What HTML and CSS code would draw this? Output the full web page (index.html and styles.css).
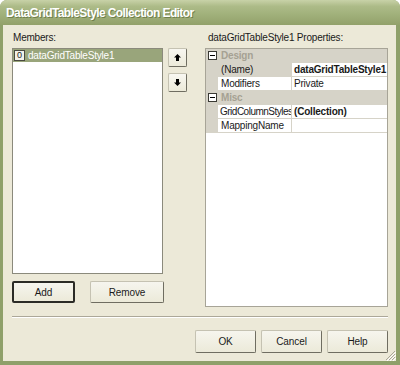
FILE: index.html
```html
<!DOCTYPE html>
<html>
<head>
<meta charset="utf-8">
<link rel="stylesheet" href="styles.css">
</head>
<body>
<div class="window">
  <div class="titlebar"><span class="title">DataGridTableStyle Collection Editor</span></div>
  <div class="client">
    <div class="top">
      <div class="members-col">
        <div class="label">Members:</div>
        <div class="listbox">
          <div class="item selected"><span class="idx">0</span><span class="item-text">dataGridTableStyle1</span></div>
        </div>
        <div class="list-buttons">
          <button class="btn btn-default add">Add</button>
          <button class="btn remove">Remove</button>
        </div>
      </div>
      <div class="arrows">
        <button class="arrow-btn"><svg width="7" height="7" viewBox="0 0 7 7"><path d="M3.5 0 L7 3.5 H5 V7 H2 V3.5 H0 Z" fill="#000"/></svg></button>
        <button class="arrow-btn"><svg width="7" height="7" viewBox="0 0 7 7"><path d="M3.5 7 L7 3.5 H5 V0 H2 V3.5 H0 Z" fill="#000"/></svg></button>
      </div>
      <div class="props-col">
        <div class="label">dataGridTableStyle1 Properties:</div>
        <div class="propgrid">
          <div class="pg-row category"><span class="gutter"><span class="toggle"></span></span><span class="cat-name">Design</span></div>
          <div class="pg-row"><span class="gutter"></span><span class="pname sel">(Name)</span><span class="pval bold">dataGridTableStyle1</span></div>
          <div class="pg-row"><span class="gutter"></span><span class="pname">Modifiers</span><span class="pval">Private</span></div>
          <div class="pg-row category"><span class="gutter"><span class="toggle"></span></span><span class="cat-name">Misc</span></div>
          <div class="pg-row"><span class="gutter"></span><span class="pname tight">GridColumnStyles</span><span class="pval bold">(Collection)</span></div>
          <div class="pg-row"><span class="gutter"></span><span class="pname">MappingName</span><span class="pval"></span></div>
        </div>
      </div>
    </div>
    <div class="separator"></div>
    <div class="dialog-buttons">
      <button class="btn dlg">OK</button>
      <button class="btn dlg">Cancel</button>
      <button class="btn dlg">Help</button>
    </div>
    <svg class="grip" width="12" height="12" viewBox="0 0 12 12">
      <path d="M11 2 L2 11 M11 5 L5 11 M11 8 L8 11" stroke="#a9a797" stroke-width="1"/>
      <path d="M12 3 L3 12 M12 6 L6 12 M12 9 L9 12" stroke="#fff" stroke-width="1"/>
    </svg>
  </div>
</div>
</body>
</html>
```

FILE: styles.css
```css
* { box-sizing: border-box; }
html, body { margin: 0; padding: 0; background: #fff; }
body { font-family: "Liberation Sans", Arial, sans-serif; font-size: 10px; color: #1a1a1a; }

.window {
  width: 400px;
  height: 365px;
  display: flex;
  flex-direction: column;
  background: #8fa06a;
  border-radius: 7px 7px 0 0;
  overflow: hidden;
}

.titlebar {
  height: 25px;
  flex: none;
  background: linear-gradient(#c8d2a8, #adbb88 25%, #a0b07a 60%, #92a16a);
  padding: 6px 0 0 6px;
}
.title {
  color: #fff;
  font-weight: bold;
  font-size: 12px;
  letter-spacing: -0.6px;
  text-shadow: 1px 1px 0 #6f7f4b;
}

.client {
  position: relative;
  flex: 1;
  margin: 0 4px 4px 3px;
  background: #ece9d8;
  padding: 7px 8px 0 9px;
  letter-spacing: -0.2px;
}

.top { display: flex; align-items: flex-start; }

.label { height: 16px; line-height: 12px; }
.members-col { width: 154px; }
.members-col .label { padding-left: 1px; }
.props-col .label { padding-left: 3px; }

.listbox {
  width: 151px;
  height: 226px;
  background: #fff;
  border: 1px solid #8b8a7c;
}
.item {
  display: flex;
  align-items: center;
  height: 13px;
}
.item.selected { background: #99a57b; }
.idx {
  width: 11px;
  height: 11px;
  margin: 0 3px 0 1px;
  border: 1px solid #4a4a40;
  background: #f2f1e9;
  font-size: 9px;
  line-height: 9px;
  text-align: center;
  color: #222;
}
.item-text { color: #fff; line-height: 13px; }

.list-buttons { display: flex; margin-top: 7px; }

.btn {
  font-family: "Liberation Sans", Arial, sans-serif;
  font-size: 10px;
  letter-spacing: -0.1px;
  color: #1a1a1a;
  height: 22px;
  padding: 0;
  background: linear-gradient(#f6f5ee, #ecead9);
  border: 1px solid;
  border-color: #c5c2b2 #6f6d61 #6f6d61 #c5c2b2;
  border-radius: 2px;
}
.btn-default { border: 2px solid #2b2b26; }
.add { width: 63px; }
.remove { width: 74px; margin-left: 15px; }

.arrows {
  display: flex;
  flex-direction: column;
  gap: 6px;
  margin-left: 2px;
  margin-top: 16px;
  width: 19px;
}
.arrow-btn {
  width: 19px;
  height: 19px;
  padding: 0;
  display: flex;
  align-items: center;
  justify-content: center;
  background: linear-gradient(#f8f7f1, #ecead9);
  border: 1px solid;
  border-color: #c5c2b2 #6f6d61 #6f6d61 #c5c2b2;
  border-radius: 2px;
}

.props-col { margin-left: 18px; width: 183px; }

.propgrid {
  width: 183px;
  height: 259px;
  background: #fff;
  border: 1px solid #a7a497;
}
.pg-row {
  display: grid;
  grid-template-columns: 12px 74px 1fr;
  height: 14px;
  line-height: 13px;
  border-bottom: 1px solid #d6d3c8;
}
.pg-row.category {
  background: #d6d3c8;
  grid-template-columns: 12px 1fr;
}
.gutter {
  background: #d6d3c8;
  position: relative;
}
.toggle {
  position: absolute;
  left: 2px;
  top: 2px;
  width: 9px;
  height: 9px;
  border: 1px solid #3a3a34;
  background: #fff;
}
.toggle::after {
  content: "";
  position: absolute;
  left: 1px;
  top: 3px;
  width: 5px;
  height: 1px;
  background: #000;
}
.cat-name { color: #a5a193; font-weight: bold; padding-left: 3px; }
.pname {
  padding-left: 3px;
  white-space: nowrap;
  overflow: hidden;
  border-right: 1px solid #d6d3c8;
}
.pname.tight { padding-left: 2px; letter-spacing: -0.5px; }
.pname.sel { background: #d6d3c8; }
.pval { padding-left: 2px; white-space: nowrap; overflow: hidden; }
.pval.bold { font-weight: bold; }

.separator {
  margin-top: 9px;
  height: 2px;
  border-top: 1px solid #aca899;
  border-bottom: 1px solid #fff;
}

.dialog-buttons {
  display: flex;
  justify-content: flex-end;
  gap: 5px;
  margin-top: 12px;
}
.dlg { width: 61px; height: 23px; }

.grip {
  position: absolute;
  right: 0;
  bottom: 0;
}
```
